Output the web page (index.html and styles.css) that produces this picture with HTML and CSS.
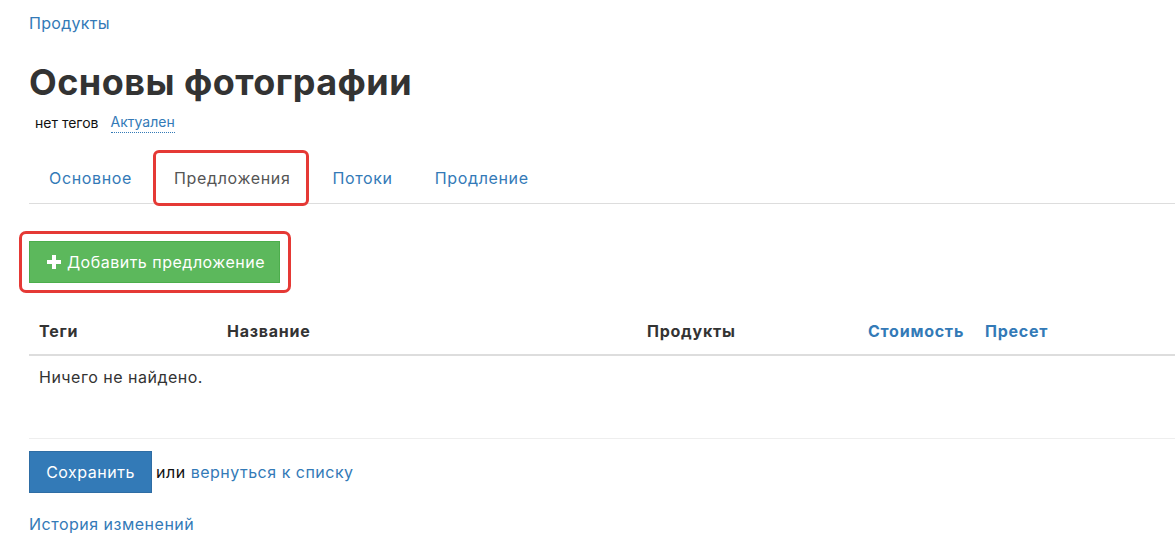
FILE: index.html
```html
<!DOCTYPE html>
<html lang="ru">
<head>
<meta charset="utf-8">
<title>Основы фотографии</title>
<link rel="stylesheet" href="styles.css">
</head>
<body>
<main class="page">
  <nav class="crumbs"><a href="#">Продукты</a></nav>
  <h1 class="title">Основы фотографии</h1>
  <div class="meta">
    <span class="tags">нет тегов</span>
    <a class="status" href="#">Актуален</a>
  </div>
  <ul class="tabs">
    <li class="tab"><a href="#">Основное</a></li>
    <li class="tab active"><a href="#">Предложения</a></li>
    <li class="tab"><a href="#">Потоки</a></li>
    <li class="tab"><a href="#">Продление</a></li>
  </ul>
  <div class="toolbar">
    <a class="btn btn-success highlight" href="#">
      <svg class="plus" viewBox="0 0 14 14" width="14" height="14" aria-hidden="true"><path d="M5 0h4v5h5v4H9v5H5V9H0V5h5z" fill="#fff"/></svg>
      Добавить предложение
    </a>
  </div>
  <table class="grid">
    <colgroup>
      <col class="c1"><col class="c2"><col class="c3"><col class="c4"><col class="c5">
    </colgroup>
    <thead>
      <tr>
        <th>Теги</th>
        <th>Название</th>
        <th>Продукты</th>
        <th><a href="#">Стоимость</a></th>
        <th><a href="#">Пресет</a></th>
      </tr>
    </thead>
    <tbody>
      <tr><td colspan="5">Ничего не найдено.</td></tr>
    </tbody>
  </table>
  <div class="actions">
    <button class="btn btn-primary" type="button">Сохранить</button>
    <span class="or">или <a href="#">вернуться к списку</a></span>
  </div>
  <a class="history" href="#">История изменений</a>
</main>
</body>
</html>
```

FILE: styles.css
```css
* { box-sizing: border-box; }
html, body { margin: 0; padding: 0; background: #fff; }
body {
  font-family: Inter, "Noto Sans", "Liberation Sans", sans-serif;
  font-size: 16px;
  color: #333;
  letter-spacing: 0.5px;
  overflow: hidden;
}
a { color: #337ab7; text-decoration: none; }
.page {
  padding: 12px 0 0 29px;
  width: 1175px;
}
.crumbs { font-size: 16px; line-height: 22px; letter-spacing: 0.3px; }
.title {
  margin: 28px 0 0;
  font-size: 36px;
  font-weight: 700;
  line-height: 40px;
  color: #333;
  letter-spacing: 0.45px;
}
.meta {
  margin-top: 11px;
  padding-left: 6px;
  font-size: 14px;
  line-height: 20px;
  letter-spacing: 0;
  display: flex;
  gap: 12px;
}
.tags { color: #111; }
.status { border-bottom: 1px dotted #337ab7; line-height: 18px; }
.tabs {
  list-style: none;
  margin: 20px 0 0;
  padding: 0;
  display: flex;
  gap: 2px;
  border-bottom: 1px solid #ddd;
}
.tab { position: relative; }
.tab a {
  display: block;
  padding: 14px 20px;
  line-height: 22px;
  letter-spacing: 0.65px;
}
.tab.active a { color: #555; }
.tab.active::after {
  content: "";
  position: absolute;
  left: -1px; right: 1px; top: -3px; bottom: -3px;
  border: 3px solid #e53935;
  border-radius: 6px;
}
.toolbar {
  margin-top: 37px;
  display: flex;
}
.btn {
  display: inline-flex;
  align-items: center;
  gap: 6px;
  font-family: inherit;
  font-size: 16px;
  line-height: 22px;
  letter-spacing: 0.5px;
  color: #fff;
  border: 1px solid transparent;
  border-radius: 0;
  cursor: pointer;
}
.btn-success {
  background: #5cb85c;
  border-color: #4cae4c;
  padding: 9px 14px 9px 17px;
  width: 251px;
  height: 42px;
}
.plus { flex: none; }
.highlight { position: relative; }
.highlight::after {
  content: "";
  position: absolute;
  left: -11px; right: -12px; top: -11px; bottom: -11px;
  border: 3px solid #e53935;
  border-radius: 7px;
}
.grid {
  margin-top: 23px;
  width: 1146px;
  border-collapse: collapse;
  table-layout: fixed;
}
.c1 { width: 188px; }
.c2 { width: 420px; }
.c3 { width: 221px; }
.c4 { width: 117px; }
.c5 { width: 200px; }
.grid th {
  text-align: left;
  font-weight: 700;
  padding: 14px 10px 12px;
  line-height: 22px;
  letter-spacing: 0.75px;
  border-bottom: 2px solid #ddd;
  color: #333;
}
.grid td {
  padding: 10px 10px 12px;
  line-height: 22px;
}
.actions {
  margin-top: 38px;
  border-top: 1px solid #eee;
  padding-top: 12px;
  display: flex;
  align-items: center;
}
.btn-primary {
  background: #337ab7;
  border-color: #2e6da4;
  padding: 9px 15px;
  height: 42px;
  width: 123px;
  justify-content: center;
}
.or { margin-left: 4px; color: #111; }
.history {
  display: inline-block;
  margin-top: 20px;
  line-height: 22px;
}
```
